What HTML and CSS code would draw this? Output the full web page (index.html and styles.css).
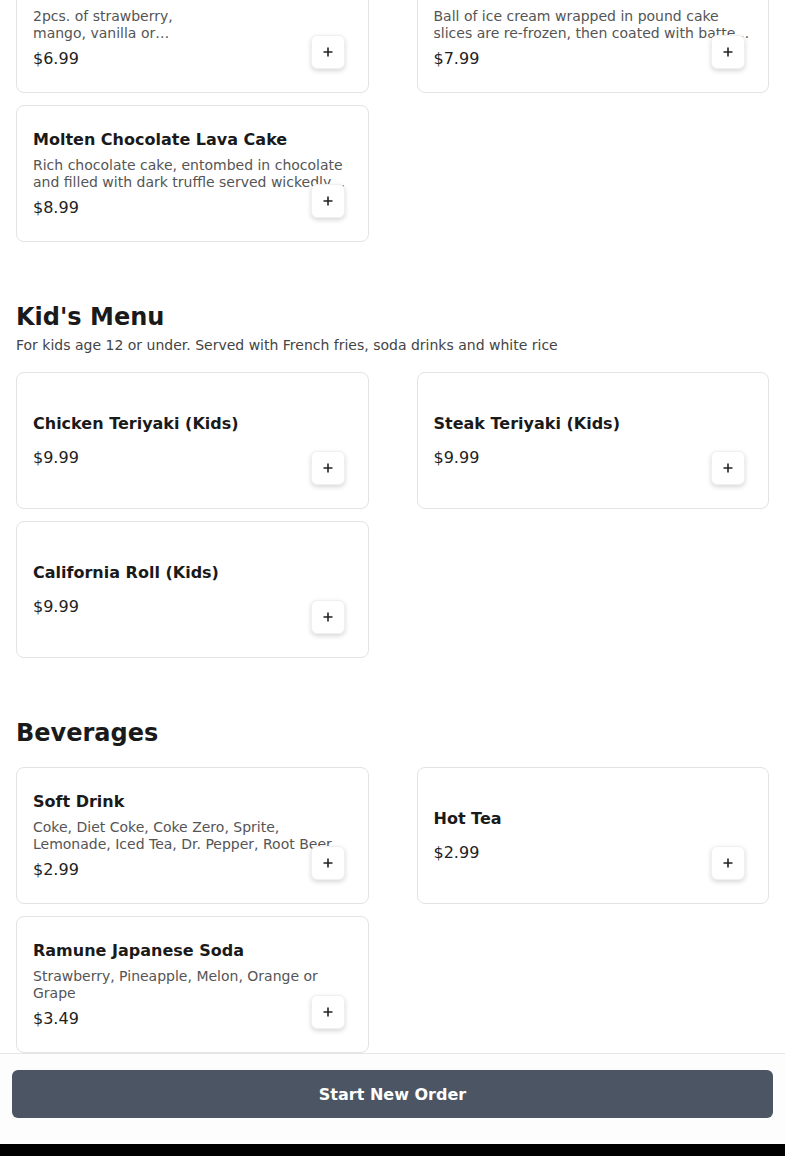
FILE: index.html
```html
<!DOCTYPE html>
<html lang="en">
<head>
<meta charset="utf-8">
<title>Menu</title>
<link rel="stylesheet" href="styles.css">
</head>
<body>
<main class="menu">
  <section class="section section-first">
    <div class="grid">
      <article class="card">
        <div class="card-body card-body-narrow">
          <h3 class="item-name">Mochi Ice Cream</h3>
          <p class="item-desc">2pcs. of strawberry, mango, vanilla or green tea mochi ice cream</p>
          <div class="item-price">$6.99</div>
        </div>
        <button class="add-btn" aria-label="Add"><svg viewBox="0 0 12 12" width="12" height="12"><path d="M6 1.5v9M1.5 6h9" stroke="#222" stroke-width="1.6" fill="none"/></svg></button>
      </article>
      <article class="card">
        <div class="card-body">
          <h3 class="item-name">Tempura Ice Cream</h3>
          <p class="item-desc">Ball of ice cream wrapped in pound cake slices are re-frozen, then coated with batter and deep fried</p>
          <div class="item-price">$7.99</div>
        </div>
        <button class="add-btn" aria-label="Add"><svg viewBox="0 0 12 12" width="12" height="12"><path d="M6 1.5v9M1.5 6h9" stroke="#222" stroke-width="1.6" fill="none"/></svg></button>
      </article>
      <article class="card">
        <div class="card-body">
          <h3 class="item-name">Molten Chocolate Lava Cake</h3>
          <p class="item-desc">Rich chocolate cake, entombed in chocolate and filled with dark truffle served wickedly warm with vanilla ice cream</p>
          <div class="item-price">$8.99</div>
        </div>
        <button class="add-btn" aria-label="Add"><svg viewBox="0 0 12 12" width="12" height="12"><path d="M6 1.5v9M1.5 6h9" stroke="#222" stroke-width="1.6" fill="none"/></svg></button>
      </article>
    </div>
  </section>

  <section class="section">
    <header class="section-head">
      <h2 class="section-title">Kid's Menu</h2>
      <p class="section-desc">For kids age 12 or under. Served with French fries, soda drinks and white rice</p>
    </header>
    <div class="grid">
      <article class="card">
        <div class="card-body">
          <h3 class="item-name">Chicken Teriyaki (Kids)</h3>
          <div class="item-price">$9.99</div>
        </div>
        <button class="add-btn" aria-label="Add"><svg viewBox="0 0 12 12" width="12" height="12"><path d="M6 1.5v9M1.5 6h9" stroke="#222" stroke-width="1.6" fill="none"/></svg></button>
      </article>
      <article class="card">
        <div class="card-body">
          <h3 class="item-name">Steak Teriyaki (Kids)</h3>
          <div class="item-price">$9.99</div>
        </div>
        <button class="add-btn" aria-label="Add"><svg viewBox="0 0 12 12" width="12" height="12"><path d="M6 1.5v9M1.5 6h9" stroke="#222" stroke-width="1.6" fill="none"/></svg></button>
      </article>
      <article class="card">
        <div class="card-body">
          <h3 class="item-name">California Roll (Kids)</h3>
          <div class="item-price">$9.99</div>
        </div>
        <button class="add-btn" aria-label="Add"><svg viewBox="0 0 12 12" width="12" height="12"><path d="M6 1.5v9M1.5 6h9" stroke="#222" stroke-width="1.6" fill="none"/></svg></button>
      </article>
    </div>
  </section>

  <section class="section">
    <header class="section-head">
      <h2 class="section-title">Beverages</h2>
    </header>
    <div class="grid">
      <article class="card">
        <div class="card-body">
          <h3 class="item-name">Soft Drink</h3>
          <p class="item-desc">Coke, Diet Coke, Coke Zero, Sprite, Lemonade, Iced Tea, Dr. Pepper, Root Beer</p>
          <div class="item-price">$2.99</div>
        </div>
        <button class="add-btn" aria-label="Add"><svg viewBox="0 0 12 12" width="12" height="12"><path d="M6 1.5v9M1.5 6h9" stroke="#222" stroke-width="1.6" fill="none"/></svg></button>
      </article>
      <article class="card">
        <div class="card-body">
          <h3 class="item-name">Hot Tea</h3>
          <div class="item-price">$2.99</div>
        </div>
        <button class="add-btn" aria-label="Add"><svg viewBox="0 0 12 12" width="12" height="12"><path d="M6 1.5v9M1.5 6h9" stroke="#222" stroke-width="1.6" fill="none"/></svg></button>
      </article>
      <article class="card">
        <div class="card-body">
          <h3 class="item-name">Ramune Japanese Soda</h3>
          <p class="item-desc">Strawberry, Pineapple, Melon, Orange or Grape</p>
          <div class="item-price">$3.49</div>
        </div>
        <button class="add-btn" aria-label="Add"><svg viewBox="0 0 12 12" width="12" height="12"><path d="M6 1.5v9M1.5 6h9" stroke="#222" stroke-width="1.6" fill="none"/></svg></button>
      </article>
    </div>
  </section>
</main>

<footer class="order-bar">
  <button class="order-btn">Start New Order</button>
</footer>
<div class="bottom-strip"></div>
</body>
</html>
```

FILE: styles.css
```css
* { box-sizing: border-box; }

html, body {
  margin: 0;
  padding: 0;
  background: #ffffff;
}

body {
  font-family: "DejaVu Sans", "Liberation Sans", sans-serif;
  color: #1a1a1a;
  overflow: hidden;
  height: 1156px;
}

.menu {
  padding: 0 16px;
  margin-top: -44px;
}

.section {
  margin-top: 58px;
}

.section-first {
  margin-top: 0;
}

.section-head {
  margin-bottom: 17px;
}

.section-title {
  margin: 0;
  font-size: 24px;
  line-height: 34px;
  font-weight: 700;
  color: #1a1a1a;
}

.section-desc {
  margin: 1px 0 0;
  font-size: 14px;
  line-height: 20px;
  color: #444444;
}

.grid {
  display: grid;
  grid-template-columns: 1fr 1fr;
  column-gap: 48px;
  row-gap: 12px;
}

.card {
  position: relative;
  height: 137px;
  border: 1px solid #e3e3e3;
  border-radius: 8px;
  background: #ffffff;
  padding: 0 16px;
  display: flex;
  flex-direction: column;
  justify-content: center;
}

.card-body {
  display: flex;
  flex-direction: column;
}

.card-body-narrow .item-desc {
  max-width: 160px;
}

.item-name {
  margin: 0 0 5px;
  font-size: 16px;
  line-height: 24px;
  font-weight: 700;
  color: #1a1a1a;
}

.item-desc {
  margin: 0;
  font-size: 14px;
  line-height: 17px;
  color: #555555;
  display: -webkit-box;
  -webkit-line-clamp: 2;
  -webkit-box-orient: vertical;
  overflow: hidden;
}

.item-price {
  margin-top: 5px;
  font-size: 16px;
  line-height: 24px;
  color: #222222;
}

.add-btn {
  position: absolute;
  right: 23px;
  bottom: 23px;
  width: 34px;
  height: 34px;
  padding: 0;
  border: 1px solid #f0f0f0;
  border-radius: 6px;
  background: #ffffff;
  box-shadow: 0 2px 5px rgba(0, 0, 0, 0.16);
  display: flex;
  align-items: center;
  justify-content: center;
}

.order-bar {
  position: fixed;
  left: 0;
  right: 0;
  bottom: 12px;
  height: 91px;
  background: #fdfdfd;
  border-top: 1px solid #e6e6e6;
  padding: 16px 12px 0;
}

.order-btn {
  display: block;
  width: 100%;
  height: 48px;
  border: 0;
  border-radius: 6px;
  background: #4b5563;
  color: #ffffff;
  font-family: "DejaVu Sans", "Liberation Sans", sans-serif;
  font-size: 16px;
  font-weight: 700;
}

.bottom-strip {
  position: fixed;
  left: 0;
  right: 0;
  bottom: 0;
  height: 12px;
  background: #000000;
}
```
